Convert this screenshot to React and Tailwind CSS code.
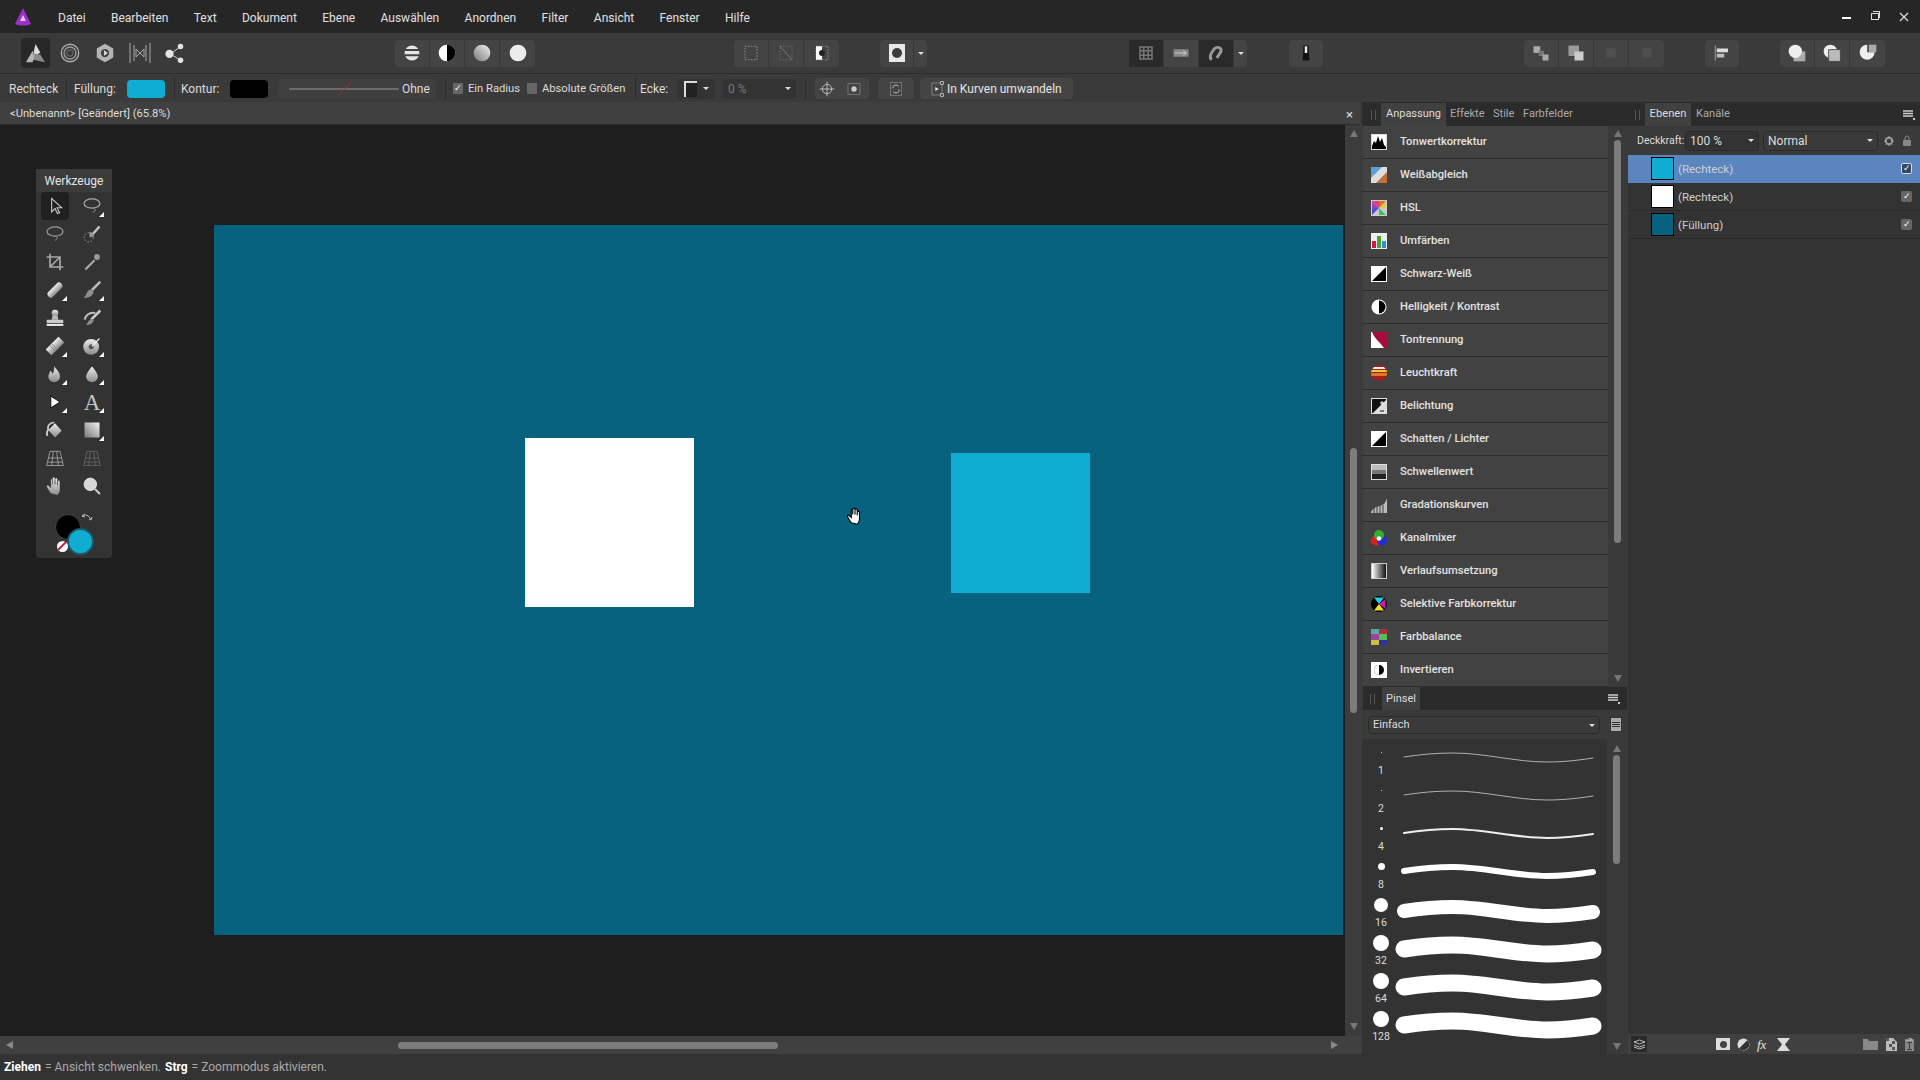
import React from 'react';

const menus = ['Datei', 'Bearbeiten', 'Text', 'Dokument', 'Ebene', 'Auswählen', 'Anordnen', 'Filter', 'Ansicht', 'Fenster', 'Hilfe'];

const Svg = ({ size = 22, box = 24, children }) => (
  <svg width={size} height={size} viewBox={`0 0 ${box} ${box}`} fill="none">{children}</svg>
);

const Gradients = () => (
  <svg className="absolute w-0 h-0">
    <defs>
      <linearGradient id="gv" x1="0" y1="0" x2="0" y2="1"><stop offset="0" stopColor="#eee" /><stop offset="1" stopColor="#8a8a8a" /></linearGradient>
      <linearGradient id="gd" x1="1" y1="0" x2="0" y2="1"><stop offset="0" stopColor="#f2f2f2" /><stop offset="1" stopColor="#777" /></linearGradient>
      <linearGradient id="gh" x1="0" y1="0" x2="1" y2="0"><stop offset="0" stopColor="#fff" /><stop offset="1" stopColor="#111" /></linearGradient>
    </defs>
  </svg>
);

const handPath = 'M7 21c-2-3-5-7-5-9s2-1 3 0l2 2V5c0-2 2-2 2 0v5-7c0-2 3-2 3 0v7-6c0-2 3-2 3 0v7-4c0-2 3-2 3 0v9c0 3-1 5-3 7z';

// werkzeuge
const tools = [
  [<path d="M8 3v16l4-4 3 6 2.500-1-3-6H20z" stroke="#c8c8c8" strokeWidth="1.300" />, false],
  [<><ellipse cx="12" cy="9" rx="9.500" ry="5.500" stroke="#aaa" strokeWidth="1.500" /><path d="M14 14.500c3 2 2 4-1 5" stroke="#aaa" /></>, true],
  [<><ellipse cx="12" cy="9" rx="9.500" ry="5.500" stroke="#999" strokeWidth="1.500" /><path d="M13 14.500c3 2 2 4-1 5" stroke="#999" /></>, false],
  [<><path d="M21 3l-8 9" stroke="#c4c4c4" strokeWidth="3" /><path d="M9 10c3-1 6 2 5 5l-5 1z" fill="#999" /><circle cx="8" cy="16" r="5.500" stroke="#aaa" strokeDasharray="2 2" /></>, false],
  [<path d="M6 2v16h16M2 6h16v16M6 18L18 6" stroke="#a8a8a8" strokeWidth="2" />, false],
  [<><path d="M4 21l11-11" stroke="#aaa" strokeWidth="2.500" /><circle cx="18" cy="6" r="3.500" fill="#999" /></>, false],
  [<rect x="1" y="8" width="22" height="8" rx="4" fill="url(#gv)" transform="rotate(-45 12 12)" />, true],
  [<><path d="M22 2L12 12" stroke="#bbb" strokeWidth="3" /><path d="M2 21c3-1 3-9 9-10l3 3c-1 6-8 8-12 7z" fill="#8d8d8d" /></>, true],
  [<><circle cx="12" cy="6" r="4" fill="url(#gv)" /><path d="M9 9h6l1 5H8z" fill="#bbb" /><rect x="2" y="14" width="20" height="4" rx="1" fill="#ccc" /><rect x="2" y="19" width="20" height="2.500" fill="#eee" /></>, false],
  [<><path d="M3 14c2-6 7-9 13-8" stroke="#bbb" strokeWidth="2.500" /><path d="M22 3L11 14" stroke="#ccc" strokeWidth="3" /><path d="M5 20c2-1 3-7 7-7l2 2c-1 4-5 6-9 5z" fill="#888" /></>, false],
  [<g transform="rotate(-45 12 12)"><rect x="1" y="7" width="22" height="10" rx="1" fill="url(#gv)" /><path d="M8 7v10M11 7v10" stroke="#777" /></g>, true],
  [<><circle cx="11" cy="13" r="9.500" fill="url(#gv)" /><circle cx="11" cy="13" r="3" fill="#555" /><path d="M12 12l9-9" stroke="#eee" strokeWidth="1.500" /></>, true],
  [<path d="M11 2c1 4 7 6 7 13a7 7 0 0 1-14 0c0-3 2-4 2-7 2 1 3 2 3 4 2-3 2-6 2-10z" fill="url(#gv)" />, true],
  [<path d="M12 3c0 0-7 8-7 12a7 7 0 0 0 14 0c0-4-7-12-7-12z" fill="url(#gv)" />, true],
  [<path d="M7 5l11 7-11 7z" fill="#fff" stroke="#000" />, true],
  ['A', true],
  [<><path d="M4 12l8-8 8 9-8 8z" fill="url(#gv)" /><path d="M4 12c-2-5 2-9 7-9" stroke="#ccc" strokeWidth="2" /><path d="M4 12c-2 2-2 5-1 7" stroke="#ddd" strokeWidth="2" /></>, false],
  [<rect x="3" y="3" width="18" height="18" fill="url(#gd)" />, true],
  [<path d="M6 4h12l4 17H2zM4 12h16M3 17h18M10 4L8 21M14 4l2 17" stroke="#a8a8a8" />, false],
  [<path d="M6 4h12l4 17H2zM4 12h16M3 17h18M10 4L8 21M14 4l2 17" stroke="#666" />, false],
  [<path d={handPath} fill="url(#gv)" stroke="#333" strokeWidth="0.500" />, false],
  [<><circle cx="10" cy="10" r="7.500" fill="#d8d8d8" stroke="#eee" /><path d="M15.500 15.500l6 6" stroke="#ccc" strokeWidth="2.500" /></>, false],
];

const Tool = ({ icon, flyout, active }) => (
  <div className={`relative w-[28px] h-[28px] flex items-center justify-center rounded-sm ${active ? 'bg-[#202020]' : ''}`}>
    {icon === 'A' ? (
      <span className="text-[23px] leading-none text-[#c4c4c4] [font-family:'Liberation_Serif',serif]">A</span>
    ) : (
      <Svg size={20}>{icon}</Svg>
    )}
    {flyout && <span className="absolute right-[2px] bottom-[3px] w-0 h-0 border-l-[5px] border-l-transparent border-b-[5px] border-b-white" />}
  </div>
);

const ToolPanel = () => (
  <div className="absolute left-[36px] top-[44px] w-[76px] h-[389px] bg-[#333333] rounded-sm z-10">
    <div className="h-[23px] bg-[#3b3b3b] flex items-center justify-center text-[12px] text-[#e4e4e4]">Werkzeuge</div>
    <div className="grid grid-cols-[28px_28px] gap-x-[9px] pl-[5px]">
      {tools.map(([icon, flyout], i) => <Tool key={i} icon={icon} flyout={flyout} active={i === 0} />)}
    </div>
    <div className="relative h-[58px]">
      <span className="absolute left-[19px] top-[14px] w-[26px] h-[26px] rounded-full bg-black border border-[#444]" />
      <span className="absolute left-[31px] top-[28px] w-[27px] h-[27px] rounded-full bg-[#0fadd1] border-2 border-[#1d5a6a]" />
      <span className="absolute left-[21px] top-[41px] w-[11px] h-[11px] rounded-full bg-white overflow-hidden">
        <span className="block w-[14px] h-[2px] bg-[#c02040] rotate-[-45deg] mt-[4px] ml-[-2px]" />
      </span>
      <svg className="absolute left-[44px] top-[12px]" width="13" height="13" viewBox="0 0 13 13" fill="none">
        <path d="M2 4c3-2 7-1 9 4M2 4l3-2M2 4l3 1M11 8l-2-1M11 8l1-3" stroke="#bbb" />
      </svg>
    </div>
  </div>
);

// toolbar
const BtnGroup = ({ children, className = '' }) => (
  <div className={`flex h-[27px] bg-[#444444] rounded-sm divide-x divide-[#383838] ${className}`}>{children}</div>
);

const Btn = ({ w = 'w-[35px]', dark, children }) => (
  <div className={`${w} h-full flex items-center justify-center ${dark ? 'bg-[#2a2a2a]' : ''}`}>{children}</div>
);

const Caret = () => <span className="w-0 h-0 border-x-[3px] border-x-transparent border-t-[3px] border-t-[#ddd]" />;

const ToolBar = () => (
  <div className="h-[41px] bg-[#3a3a3a] border-b border-[#2b2b2b] flex items-center">
    <div className="flex items-center w-[395px] pl-[21px] shrink-0">
      <div className="w-[29px] h-[30px] bg-[#272727] rounded-sm flex items-center justify-center mr-[2px]">
        <Svg size={23}>
          <path d="M12 2l5 9-5 3-2-3z" fill="#ddd" />
          <path d="M10 12l-3 6 15 3-5-8z" fill="#8a8a8a" />
          <path d="M9 9L2 21h7l2-6z" fill="#b4b4b4" />
        </Svg>
      </div>
      <div className="w-[35px] flex justify-center"><Svg size={22}><circle cx="12" cy="12" r="9.500" stroke="#aaa" strokeWidth="1.500" /><circle cx="12" cy="12" r="6.500" stroke="#999" strokeWidth="1.500" /><circle cx="12" cy="12" r="3.500" stroke="#777" /></Svg></div>
      <div className="w-[35px] flex justify-center"><Svg size={22}><path d="M12 2l9 5v10l-9 5-9-5V7z" fill="#b5b5b5" /><circle cx="12" cy="12" r="4.500" fill="#444" /><path d="M11 9l4 3-4 3z" fill="#ddd" /></Svg></div>
      <div className="w-[35px] flex justify-center"><Svg size={24}><path d="M2 2v20M6 4v16M22 2v20M18 4v16M8 8l4 4-4 4zM16 8l-4 4 4 4z" stroke="#aaa" /></Svg></div>
      <div className="w-[35px] flex justify-center"><Svg size={22}><path d="M7 13L18 5M7 13l11 7" stroke="#ddd" /><circle cx="6" cy="13" r="4.500" fill="#e4e4e4" /><circle cx="18" cy="5" r="3" fill="#e4e4e4" /><circle cx="18" cy="20" r="3" fill="#e4e4e4" /></Svg></div>
    </div>
    <BtnGroup className="shrink-0">
      <Btn><Svg size={18}><circle cx="12" cy="12" r="10" fill="#e6e6e6" /><path d="M1 8h22M1 15h22" stroke="#444" strokeWidth="2.500" /></Svg></Btn>
      <Btn><Svg size={20}><circle cx="12" cy="12" r="10" fill="#fff" /><path d="M12 2a10 10 0 0 1 0 20z" fill="#000" /></Svg></Btn>
      <Btn><Svg size={20}><circle cx="12" cy="12" r="10" fill="url(#gd)" /></Svg></Btn>
      <Btn><Svg size={20}><circle cx="12" cy="12" r="10" fill="#ececec" /></Svg></Btn>
    </BtnGroup>
    <BtnGroup className="ml-[199px] shrink-0">
      <Btn><Svg size={18}><rect x="4" y="3" width="16" height="18" stroke="#aaa" strokeDasharray="2 2" /></Svg></Btn>
      <Btn><Svg size={18}><rect x="4" y="3" width="16" height="18" stroke="#777" strokeDasharray="2 2" /><path d="M4 3l16 18" stroke="#888" /></Svg></Btn>
      <Btn><Svg size={18}><rect x="4" y="3" width="16" height="18" stroke="#aaa" strokeDasharray="2 2" /><rect x="4" y="3" width="8" height="18" fill="#fff" /><circle cx="12" cy="12" r="4" fill="#222" /></Svg></Btn>
    </BtnGroup>
    <BtnGroup className="ml-[41px] shrink-0">
      <Btn w="w-[34px]"><div className="w-[16px] h-[18px] bg-[#e8e8e8] flex items-center justify-center"><span className="w-[10px] h-[10px] rounded-full bg-[#3b3b3b]" /></div></Btn>
      <Btn w="w-[13px]"><Caret /></Btn>
    </BtnGroup>
    <BtnGroup className="ml-[202px] shrink-0">
      <Btn dark><Svg size={18}><path d="M4 4h16v16H4zM9 4v16M15 4v16M4 9h16M4 15h16" stroke="#777" strokeWidth="2" /></Svg></Btn>
      <Btn><Svg size={18}><rect x="2" y="7" width="20" height="10" fill="#888" /><path d="M4 12h14M15 9l4 3-4 3" stroke="#ddd" /></Svg></Btn>
      <Btn dark><Svg size={20}><path d="M7 20c-4-3-1-8 3-13 3-3 9-2 8 3l-5 8" stroke="#999" strokeWidth="3.500" /></Svg></Btn>
      <Btn w="w-[13px]"><Caret /></Btn>
    </BtnGroup>
    <BtnGroup className="ml-[42px] shrink-0">
      <Btn w="w-[34px]"><Svg size={20}><path d="M9 3h6l1 18H8z" fill="#111" /><rect x="10.500" y="4" width="3" height="8" fill="#eee" /></Svg></Btn>
    </BtnGroup>
    <BtnGroup className="ml-[201px] shrink-0">
      <Btn><Svg size={18}><rect x="2" y="3" width="9" height="9" fill="#aaa" /><rect x="9" y="9" width="7" height="7" fill="#777" /><rect x="14" y="14" width="8" height="8" fill="#aaa" /></Svg></Btn>
      <Btn><Svg size={18}><rect x="2" y="2" width="14" height="14" fill="#999" /><rect x="10" y="10" width="12" height="12" fill="#ccc" /></Svg></Btn>
      <Btn><Svg size={14}><rect x="4" y="4" width="16" height="16" fill="#4f4f4f" /></Svg></Btn>
      <Btn><Svg size={14}><rect x="4" y="4" width="16" height="16" fill="#4f4f4f" /></Svg></Btn>
    </BtnGroup>
    <BtnGroup className="ml-[41px] shrink-0">
      <Btn w="w-[34px]"><Svg size={18}><path d="M3 2v20" stroke="#bbb" /><rect x="5" y="6" width="15" height="5" fill="#ddd" /><rect x="5" y="13" width="10" height="5" fill="#bbb" /></Svg></Btn>
    </BtnGroup>
    <BtnGroup className="ml-[41px] shrink-0">
      <Btn><Svg size={20}><path d="M8 10h14v12H8z" fill="#aaa" /><circle cx="10" cy="10" r="8" fill="#eee" /></Svg></Btn>
      <Btn><Svg size={20}><circle cx="10" cy="10" r="8" fill="#eee" /><rect x="8" y="8" width="14" height="14" fill="#bbb" stroke="#444" /></Svg></Btn>
      <Btn><Svg size={20}><path d="M11 2a9 9 0 1 0 9 9h-9z" fill="#eee" /><path d="M13 2h9v9h-9z" fill="#aaa" /></Svg></Btn>
    </BtnGroup>
  </div>
);

// kontext
const Sep = ({ ml }) => <span className={`w-px h-[22px] bg-[#2c2c2c] shrink-0 ${ml}`} />;

const Box = ({ checked }) => (
  <span className="w-[10px] h-[11px] rounded-[1px] bg-[#666] flex items-center justify-center text-[9px] leading-none text-white shrink-0">{checked ? '✓' : ''}</span>
);

const ContextBar = () => (
  <div className="h-[28px] bg-[#3a3a3a] flex items-center text-[12px] text-[#dcdcdc] pl-[9px] pt-px whitespace-nowrap">
    <span className="w-[47px] shrink-0">Rechteck</span>
    <Sep ml="ml-[10px]" />
    <span className="ml-[7px] w-[42px] shrink-0">Füllung:</span>
    <span className="ml-[11px] w-[38px] h-[18px] bg-[#0fadd1] rounded-sm shrink-0" />
    <Sep ml="ml-[9px]" />
    <span className="ml-[6px] w-[38px] shrink-0">Kontur:</span>
    <span className="ml-[11px] w-[38px] h-[18px] bg-black rounded-sm shrink-0" />
    <div className="ml-[10px] w-[158px] h-[20px] bg-[#3f3f3f] rounded-sm flex items-center pl-[11px] shrink-0">
      <svg width="110" height="16" viewBox="0 0 110 16"><path d="M0 8h110" stroke="#999" /><path d="M49 15L62 1" stroke="#a03030" /></svg>
      <span className="ml-[3px]">Ohne</span>
    </div>
    <Sep ml="ml-[9px]" />
    <span className="ml-[7px]"><Box checked /></span>
    <span className="ml-[5px] pt-px w-[50px] shrink-0 text-[11.200px]">Ein Radius</span>
    <span className="ml-[9px]"><Box /></span>
    <span className="ml-[5px] pt-px w-[82px] shrink-0 text-[11.200px]">Absolute Größen</span>
    <Sep ml="ml-[11px]" />
    <span className="ml-[4px] w-[27px] shrink-0">Ecke:</span>
    <div className="ml-[10px] w-[38px] h-[20px] bg-[#333] rounded-sm flex items-center pl-[7px] gap-[6px] shrink-0">
      <span className="w-[13px] h-[16px] border-t-2 border-l-2 border-[#ddd] bg-[#222]" />
      <Caret />
    </div>
    <div className="ml-[8px] w-[73px] h-[20px] bg-[#333] rounded-sm flex items-center justify-between px-[5px] text-[#777] shrink-0">
      <span>0 %</span>
      <Caret />
    </div>
    <Sep ml="ml-[9px]" />
    <div className="ml-[9px] w-[54px] h-[21px] bg-[#444] rounded-sm flex shrink-0">
      <div className="w-[23px] flex items-center justify-center"><Svg size={16}><circle cx="12" cy="12" r="7" stroke="#eee" /><path d="M12 1v22M1 12h22" stroke="#eee" /></Svg></div>
      <div className="w-[31px] flex items-center justify-center"><Svg size={16}><rect x="3" y="4" width="18" height="16" stroke="#888" /><circle cx="12" cy="12" r="4" fill="#ccc" /></Svg></div>
    </div>
    <div className="ml-[9px] w-[36px] h-[21px] bg-[#444] rounded-sm flex items-center justify-center shrink-0">
      <Svg size={16}><rect x="4" y="2" width="16" height="20" stroke="#888" /><path d="M7 11a5 5 0 0 1 9-3M17 13a5 5 0 0 1-9 3" stroke="#eee" /></Svg>
    </div>
    <div className="ml-[6px] w-[153px] h-[21px] bg-[#444] rounded-sm flex items-center pl-[10px] gap-[1px] shrink-0">
      <Svg size={16}><rect x="3" y="3" width="15" height="18" stroke="#999" /><path d="M8 9l5 3-5 3z" fill="#eee" /><rect x="16" y="1" width="4" height="4" fill="#444" stroke="#eee" /><rect x="16" y="19" width="4" height="4" fill="#444" stroke="#eee" /></Svg>
      <span className="text-[#e6e6e6]">In Kurven umwandeln</span>
    </div>
  </div>
);

// anpassung
const adjustments = [
  ['Tonwertkorrektur', <><rect width="16" height="16" fill="#ddd" /><rect x="1" y="1" width="14" height="14" fill="#fff" /><path d="M1 15V12l2-5 2 2 2-7 2 6 2-4 2 7 2 2v2z" fill="#000" /></>],
  ['Weißabgleich', <><rect width="16" height="16" fill="#ddd" /><path d="M0 0h11L0 11z" fill="#5aa0dc" /><path d="M16 16H5L16 5z" fill="#c4703a" /></>],
  ['HSL', <><rect width="16" height="16" fill="#ccc" /><path d="M1 1h7v7z" fill="#e04060" /><path d="M15 1v7H8z" fill="#e0d040" /><path d="M15 15H8V8z" fill="#40c060" /><path d="M1 15V8h7z" fill="#5050d0" /><path d="M1 1l7 7-7 0z" fill="#a040c0" /><path d="M8 1h7L8 8z" fill="#e07030" /></>],
  ['Umfärben', <><rect width="16" height="16" fill="#eee" /><rect x="1" y="8" width="4" height="7" fill="#c8203c" /><rect x="6" y="3" width="4" height="12" fill="#50a030" /><rect x="11" y="8" width="4" height="7" fill="#3090d0" /></>],
  ['Schwarz-Weiß', <><rect width="16" height="16" fill="#fff" /><path d="M15 1v14H1z" fill="#000" /></>],
  ['Helligkeit / Kontrast', <><circle cx="8" cy="8" r="7.500" fill="#fff" /><path d="M8 1.500a6.500 6.500 0 0 1 0 13z" fill="#000" /></>],
  ['Tontrennung', <><rect width="16" height="16" fill="#fff" /><path d="M1 0h15v16H13L9 11 6 8 3 4z" fill="#a80c3c" /></>],
  ['Leuchtkraft', <><circle cx="8" cy="8" r="8" fill="#a02020" /><path d="M3 2h10l1.500 2h-13z" fill="#eee" /><path d="M.5 5h15l.5 2H0z" fill="#f0c830" /><path d="M0 8h16l-.5 3H.5z" fill="#e07a20" /></>],
  ['Belichtung', <><rect width="16" height="16" fill="#ddd" /><path d="M1 1h14v1L2 15H1z" fill="#111" /><path d="M9 5h4M11 3v4" stroke="#fff" /><path d="M9 13h4" stroke="#111" /></>],
  ['Schatten / Lichter', <><rect width="16" height="16" fill="#fff" /><path d="M15 1v14H1z" fill="#000" /></>],
  ['Schwellenwert', <><rect width="16" height="16" fill="#ddd" /><rect x="1" y="1" width="14" height="5" fill="#bbb" /><rect x="1" y="6" width="14" height="4" fill="#777" /><rect x="1" y="10" width="14" height="5" fill="#222" /></>],
  ['Gradationskurven', <><path d="M0 15C3 9 9 10 13 7c1-1 2-3 3-6v15H0z" fill="#bbb" /><path d="M3 11v5M6 9v7M9 9v7M12 8v8" stroke="#3f3f3f" /></>],
  ['Kanalmixer', <><circle cx="5" cy="10.500" r="5" fill="#e02020" /><circle cx="11" cy="10.500" r="5" fill="#2030d0" /><circle cx="8" cy="5" r="5" fill="#30b030" /><circle cx="8" cy="8.500" r="2.300" fill="#fff" /></>],
  ['Verlaufsumsetzung', <><rect width="16" height="16" fill="#ccc" /><rect x="1" y="1" width="14" height="14" fill="url(#gh)" /></>],
  ['Selektive Farbkorrektur', <><circle cx="8" cy="8" r="8" fill="#000" /><path d="M3 1.500h10L8 8z" fill="#20d0e0" /><path d="M14.500 3v10L8 8z" fill="#c020b0" /><path d="M3 14.500h10L8 8z" fill="#f0e020" /></>],
  ['Farbbalance', <><rect width="16" height="5" fill="#5aa8a0" /><rect x="8" width="8" height="5" fill="#a83040" /><rect y="5" width="16" height="6" fill="#a040a0" /><rect x="8" y="5" width="8" height="6" fill="#50c050" /><rect y="11" width="16" height="5" fill="#c8c040" /><rect x="8" y="11" width="8" height="5" fill="#3030a0" /></>],
  ['Invertieren', <><rect width="16" height="16" fill="#fff" /><circle cx="8" cy="8" r="5" fill="#000" /><path d="M8 3a5 5 0 0 0 0 10z" fill="#fff" /></>],
];

const Grip = () => <span className="block w-[5px] h-[10px] border-x border-[#555] shrink-0" />;

const MenuIcon = () => (
  <svg width="12" height="10" viewBox="0 0 12 10">
    <path d="M0 1h10M0 3.500h10M0 6h10" stroke="#ccc" strokeWidth="1.500" /><path d="M10 8h2v2h-2z" fill="#ccc" />
  </svg>
);

const ArrowUp = () => <span className="w-0 h-0 border-x-[4px] border-x-transparent border-b-[7px] border-b-[#777]" />;
const ArrowDown = () => <span className="w-0 h-0 border-x-[4px] border-x-transparent border-t-[7px] border-t-[#777]" />;

const AdjustList = () => (
  <div className="h-[561px] flex bg-[#3a3a3a] pl-px">
    <div className="w-[245px] shrink-0">
      {adjustments.map(([name, icon]) => (
        <div key={name} className="h-[33px] bg-[#424242] border-b border-[#2c2c2c] flex items-center pl-[8px]">
          <svg width="16" height="16" viewBox="0 0 16 16" className="shrink-0">{icon}</svg>
          <span className="ml-[13px] pt-px text-[11.200px] font-medium text-[#e2e2e2] whitespace-nowrap">{name}</span>
        </div>
      ))}
    </div>
    <div className="w-[16px] flex flex-col items-center pt-[4px] pb-[5px] pl-[3px]">
      <ArrowUp />
      <div className="w-[7px] h-[403px] mt-[3px] bg-[#7c7c7c] rounded-full" />
      <div className="flex-1" />
      <ArrowDown />
    </div>
  </div>
);

// pinsel
const brushes = [
  { label: '1', dot: 'w-px h-px', sw: 1, col: '#b0b0b0' },
  { label: '2', dot: 'w-px h-px', sw: 1, col: '#b0b0b0' },
  { label: '4', dot: 'w-[3px] h-[3px]', sw: 2, col: '#eeeeee' },
  { label: '8', dot: 'w-[7px] h-[7px]', sw: 6, col: '#ffffff' },
  { label: '16', dot: 'w-[14px] h-[14px]', sw: 14, col: '#ffffff', big: true },
  { label: '32', dot: 'w-[16px] h-[16px]', sw: 17, col: '#ffffff', big: true },
  { label: '64', dot: 'w-[16px] h-[16px]', sw: 17, col: '#ffffff', big: true },
  { label: '128', dot: 'w-[16px] h-[16px]', sw: 17, col: '#ffffff', big: true },
];

const BrushPanel = () => (
  <div className="flex-1 flex flex-col bg-[#3a3a3a] min-h-0">
    <div className="h-[23px] bg-[#2b2b2b] flex items-center mx-px shrink-0">
      <span className="ml-[7px]"><Grip /></span>
      <div className="ml-[7px] w-[38px] h-full pt-px bg-[#404040] flex items-center justify-center text-[11px] text-[#dcdcdc]">Pinsel</div>
      <span className="ml-auto mr-[7px]"><MenuIcon /></span>
    </div>
    <div className="flex items-center h-[29px] pl-[6px] shrink-0">
      <div className="w-[232px] h-[18px] pt-[2px] bg-[#3a3a3a] border border-[#2a2a2a] rounded-sm flex items-center justify-between px-[4px] text-[11px] text-[#dcdcdc]">
        <span>Einfach</span>
        <Caret />
      </div>
      <div className="ml-[10px] w-[12px] h-[15px] bg-[#aaa] border border-[#333] flex flex-col justify-center gap-px px-px">
        <span className="h-px bg-[#333]" />
        <span className="h-px bg-[#333]" />
        <span className="h-px bg-[#333]" />
      </div>
    </div>
    <div className="flex-1 flex min-h-0">
      <div className="w-[245px] bg-[#333333] overflow-hidden shrink-0">
        {brushes.map((b) => (
          <div key={b.label} className="h-[38px] flex">
            <div className="w-[38px] shrink-0 flex flex-col items-center">
              <div className="h-[34px] flex items-center justify-center"><span className={`${b.dot} bg-white rounded-full`} /></div>
              <span className="mt-[-1px] text-[10.500px] leading-[12px] text-[#dcdcdc]">{b.label}</span>
            </div>
            <svg className="ml-[-5px]" width="207" height="38" viewBox="0 0 207 38" fill="none">
              <path
                d="M9 18C25 15.500 40 14 58 14C90 14 120 23 152 23C170 23 185 21 198 19"
                stroke={b.col}
                strokeWidth={b.sw}
                strokeLinecap="round"
                transform={b.big ? 'translate(0 2)' : undefined}
              />
            </svg>
          </div>
        ))}
      </div>
      <div className="w-[16px] flex flex-col items-center pt-[6px] pb-[4px] pl-[3px]">
        <ArrowUp />
        <div className="w-[7px] h-[109px] mt-[3px] bg-[#7c7c7c] rounded-full" />
        <div className="flex-1" />
        <ArrowDown />
      </div>
    </div>
  </div>
);

// ebenen
const layers = [
  { name: '(Rechteck)', thumb: 'bg-[#0fadd1]', selected: true },
  { name: '(Rechteck)', thumb: 'bg-white' },
  { name: '(Füllung)', thumb: 'bg-[#07627f]' },
];

const LayersPanel = () => (
  <div className="w-[292px] flex flex-col bg-[#333333] shrink-0">
    <div className="h-[24px] pt-px bg-[#2b2b2b] flex items-center text-[11.200px] shrink-0">
      <span className="ml-[7px]"><Grip /></span>
      <div className="ml-[5px] w-[46px] h-full bg-[#404040] flex items-center justify-center text-[#dcdcdc]">Ebenen</div>
      <span className="ml-[5px] text-[#aaa]">Kanäle</span>
      <span className="ml-auto mr-[5px]"><MenuIcon /></span>
    </div>
    <div className="h-[29px] bg-[#3a3a3a] flex items-center pl-[9px] text-[10.500px] text-[#dcdcdc] shrink-0">
      <span className="w-[47px] shrink-0 whitespace-nowrap">Deckkraft:</span>
      <div className="ml-px w-[74px] h-[20px] bg-[#333] border border-[#2a2a2a] rounded-sm flex items-center justify-between px-[4px]">
        <span className="text-[12px]">100 %</span>
        <Caret />
      </div>
      <div className="ml-[4px] w-[115px] h-[20px] bg-[#3a3a3a] border border-[#2a2a2a] rounded-sm flex items-center justify-between px-[4px]">
        <span className="text-[12px]">Normal</span>
        <Caret />
      </div>
      <svg className="ml-[6px]" width="10" height="10" viewBox="0 0 10 10"><circle cx="5" cy="5" r="3.200" fill="none" stroke="#999" strokeWidth="2" /><path d="M5 0v2M5 8v2M0 5h2M8 5h2M1.500 1.500l1.200 1.200M7.300 7.300l1.200 1.200M1.500 8.500l1.200-1.200M7.300 2.700l1.200-1.200" stroke="#999" /></svg>
      <svg className="ml-[9px]" width="8" height="11" viewBox="0 0 8 11"><path d="M2 5V3a2 2 0 0 1 4 0v2" fill="none" stroke="#888" /><rect y="5" width="8" height="6" rx="1" fill="#888" /></svg>
    </div>
    {layers.map((l, i) => (
      <div key={i} className={`h-[28px] flex items-center border-b shrink-0 ${l.selected ? 'bg-[#5b85bf] border-[#5b85bf]' : 'border-[#2a2a2a]'}`}>
        <span className={`ml-[23px] w-[23px] h-[23px] border border-black shrink-0 ${l.thumb}`} />
        <span className="ml-[4px] pt-[2px] text-[11.500px] text-[#cfcfcf]">{l.name}</span>
        <span className={`ml-auto mr-[8px] w-[11px] h-[11px] rounded-[2px] flex items-center justify-center text-[9px] leading-none text-white ${l.selected ? 'bg-[#34495f] border border-[#ddd]' : 'bg-[#666]'}`}>✓</span>
      </div>
    ))}
    <div className="flex-1" />
    <div className="h-[20px] bg-[#404040] flex items-center shrink-0">
      <div className="ml-[3px] w-[16px] h-[16px] bg-[#2a2a2a] flex items-center justify-center">
        <svg width="13" height="11" viewBox="0 0 13 11" fill="none"><path d="M1 3l5.500-2L12 3 6.500 5zM1 6l5.500 2L12 6M1 8l5.500 2L12 8" stroke="#bbb" /></svg>
      </div>
      <div className="ml-[69px] flex items-center gap-[7px]">
        <span className="w-[14px] h-[12px] bg-[#ddd] flex items-center justify-center"><span className="w-[7px] h-[7px] rounded-full bg-[#444]" /></span>
        <svg width="13" height="13" viewBox="0 0 13 13"><circle cx="6.500" cy="6.500" r="6" fill="#ddd" /><path d="M10.500 2A6 6 0 0 1 2 10.500z" fill="#333" /></svg>
        <span className="w-[13px] text-[13px] italic leading-none text-[#e8e8e8] [font-family:'Liberation_Serif',serif]">fx</span>
        <svg width="13" height="13" viewBox="0 0 13 13"><path d="M0 0h13L8 6.500 13 13H0l5-6.500z" fill="#ddd" /></svg>
      </div>
      <div className="ml-auto mr-[6px] flex items-center gap-[8px]">
        <svg width="15" height="11" viewBox="0 0 15 11"><path d="M0 0h5l1 2h9v9H0z" fill="#888" /></svg>
        <svg width="11" height="13" viewBox="0 0 11 13"><path d="M0 0h7l4 4v9H0z" fill="#bbb" /><path d="M0 0h3v3H0zM6 3h3v3H6zM3 6h3v3H3zM6 9h3v3H6z" fill="#555" /></svg>
        <svg width="9" height="13" viewBox="0 0 9 13" fill="none"><path d="M0 2h9M3 0h3v2M1 3h7v10H1zM3 5v6M6 5v6" stroke="#ccc" /></svg>
      </div>
    </div>
  </div>
);

const CanvasArea = () => (
  <div className="relative w-[1343px] flex-1 bg-[#1e1e1e] pt-[100px] pl-[214px] overflow-hidden">
    <ToolPanel />
    <div className="relative w-[1129px] h-[710px] bg-[#07627f]">
      <div className="absolute left-[311px] top-[213px] w-[169px] h-[169px] bg-white" />
      <div className="absolute left-[737px] top-[228px] w-[139px] h-[140px] bg-[#0fadd1]" />
      <svg className="absolute left-[632px] top-[282px]" width="18" height="18" viewBox="0 0 24 24">
        <path d={handPath} fill="#fff" stroke="#000" strokeWidth="1.500" />
      </svg>
    </div>
  </div>
);

const App = () => (
  <div className="w-[1920px] h-screen overflow-hidden flex flex-col bg-[#3a3a3a] [font-family:Roboto,sans-serif]">
    <Gradients />
    <div className="h-[33px] bg-[#262626] flex items-center shrink-0">
      <svg className="ml-[14px] shrink-0" width="18" height="18" viewBox="0 0 18 18">
        <path d="M9 0l8 16c-5 2-11 2-16 0z" fill="#9b30c8" /><path d="M9 7l3 6H6z" fill="#e8c0f8" />
      </svg>
      <div className="ml-[26px] pt-[2px] flex gap-[25.400px] text-[12px] text-[#e0e0e0]">
        {menus.map((m) => <span key={m}>{m}</span>)}
      </div>
      <div className="ml-auto flex items-center gap-[20px] pr-[11px]">
        <span className="w-[9px] h-[2px] bg-white mt-[3px]" />
        <span className="relative w-[8px] h-[7px] border border-[#ddd]">
          <span className="absolute left-[1px] top-[-3px] w-[7px] h-[7px] border-t border-r border-[#ddd]" />
        </span>
        <svg width="10" height="10" viewBox="0 0 10 10"><path d="M1 1l8 8M9 1l-8 8" stroke="#ddd" strokeWidth="1.200" /></svg>
      </div>
    </div>
    <ToolBar />
    <ContextBar />
    <div className="flex-1 flex min-h-0">
      <div className="w-[1362px] flex flex-col shrink-0">
        <div className="h-[23px] bg-[#404040] flex items-center justify-between pl-[10px] pr-[7px] pt-[3px] w-[1360px] text-[11.200px] text-[#dcdcdc] border-b border-[#2c2c2c] shrink-0">
          <span>&lt;Unbenannt&gt; [Geändert] (65.8%)</span>
          <span className="text-[13px] leading-none">×</span>
        </div>
        <div className="flex-1 flex min-h-0">
          <CanvasArea />
          <div className="w-[17px] bg-[#3c3c3c] flex flex-col items-center pt-[5px] pb-[6px]">
            <ArrowUp />
            <div className="w-[7px] h-[265px] mt-[311px] bg-[#7c7c7c] rounded-full" />
            <div className="flex-1" />
            <ArrowDown />
          </div>
        </div>
        <div className="h-[18px] bg-[#404040] flex items-center pl-[6px] shrink-0">
          <span className="w-0 h-0 border-y-[4px] border-y-transparent border-r-[7px] border-r-[#888]" />
          <div className="ml-[385px] w-[380px] h-[7px] bg-[#7c7c7c] rounded-full" />
          <span className="ml-[553px] w-0 h-0 border-y-[4px] border-y-transparent border-l-[7px] border-l-[#888]" />
        </div>
      </div>
      <div className="w-[266px] flex flex-col shrink-0">
        <div className="h-[24px] pt-px bg-[#2b2b2b] flex items-center text-[11px] text-[#aaa] shrink-0">
          <span className="ml-[9px]"><Grip /></span>
          <div className="ml-[5px] w-[65px] h-full bg-[#404040] flex items-center justify-center text-[#dcdcdc]">Anpassung</div>
          <span className="ml-[4px] w-[33px]">Effekte</span>
          <span className="ml-[10px] w-[20px]">Stile</span>
          <span className="ml-[10px]">Farbfelder</span>
        </div>
        <AdjustList />
        <BrushPanel />
      </div>
      <LayersPanel />
    </div>
    <div className="h-[26px] bg-[#333333] flex items-center pl-[4px] text-[12px] text-[#aaa] shrink-0 whitespace-nowrap">
      <b className="text-white font-bold">Ziehen</b>
      <span className="ml-1">= Ansicht schwenken.</span>
      <b className="ml-1 text-white font-bold">Strg</b>
      <span className="ml-1">= Zoommodus aktivieren.</span>
    </div>
  </div>
);

export default App;
